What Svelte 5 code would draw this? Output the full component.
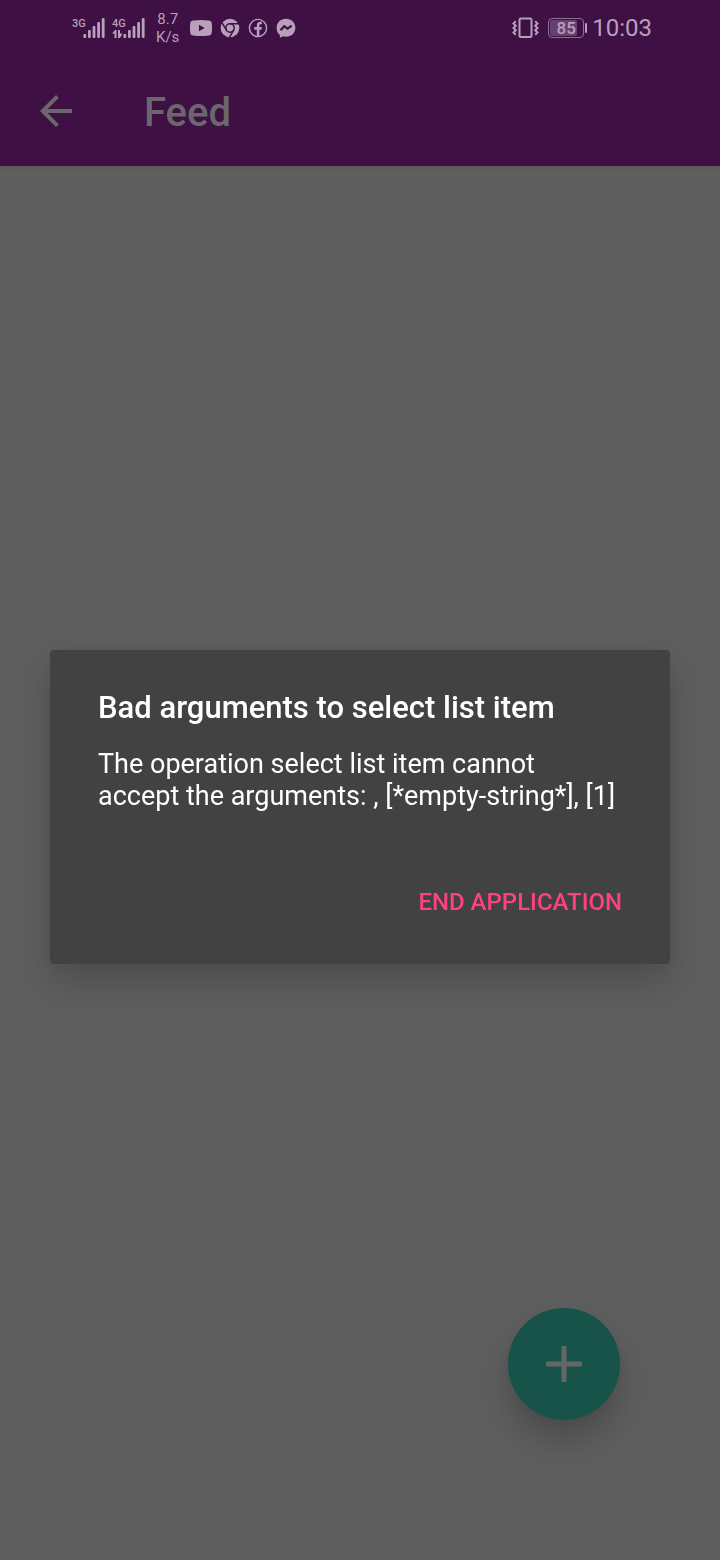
<script lang="ts">
    let {
        title = "Feed",
        networks = ["3G", "4G"],
        battery = 85,
        time = "10:03",
    }: {
        title?: string;
        networks?: string[];
        battery?: number;
        time?: string;
    } = $props();

    let dialogOpen = $state(true);

    const bars = [4, 8, 12, 16, 20];
</script>

<div class="screen">
    <div class="status-bar">
        <div class="status-group">
            {#each networks as network (network)}
                <svg class="signal" width="34" height="24" viewBox="0 0 34 24" aria-hidden="true">
                    <text x="0" y="11">{network}</text>
                    {#each bars as height, i (height)}
                        <rect x={11.4 + i * 4.6} y={22 - height} width="2.8" {height} rx="1" />
                    {/each}
                    {#if network === "4G"}
                        <path d="M0 17.5 3 14h1.500v8h-2v-4.500zM6 14h2v3.500h2.500L8 22H6z" />
                    {/if}
                </svg>
            {/each}
            <div class="speed"><span>8.7</span><span>K/s</span></div>
            <div class="apps">
                <svg width="22" height="20" viewBox="0 0 22 20" aria-hidden="true">
                    <path fill-rule="evenodd" d="M3 2.6Q11 1.4 19 2.6Q21.6 2.8 21.8 5.4Q22.3 10 21.8 14.6Q21.6 17.2 19 17.4Q11 18.6 3 17.4Q.4 17.2.2 14.6Q-.3 10 .2 5.4Q.4 2.8 3 2.6zM9 6.8v6.4l5.6-3.2z" />
                </svg>
                <svg width="20" height="20" viewBox="0 0 20 20" aria-hidden="true">
                    <circle cx="10" cy="10" r="9.3" />
                    <g class="cut">
                        <circle cx="10" cy="10" r="4.2" />
                        <path d="M10 5.8h9M6.4 12.1 2.1 4.8M13.6 12.1 9.4 19.4" />
                    </g>
                </svg>
                <svg width="20" height="20" viewBox="0 0 20 20" aria-hidden="true">
                    <circle class="ring" cx="10" cy="10" r="8.6" />
                    <path d="M8.8 18.6v-6.8H6.3V9.1h2.5V7.3c0-2.3 1.3-3.5 3.4-3.5h1.7v2.4h-1.2c-1 0-1.3.5-1.3 1.3v1.6h2.5l-.4 2.7h-2.1v6.8z" />
                </svg>
                <svg width="20" height="20" viewBox="0 0 20 20" aria-hidden="true">
                    <path d="M10 .7c5.4 0 9.4 3.9 9.4 9s-4 9-9.4 9c-1 0-1.9-.1-2.8-.4L3.9 19.8V17C1.8 15.3.6 12.8.6 9.7.6 4.6 4.6.7 10 .7z" />
                    <path class="bolt" d="M4.5 12.2 8.3 8.2 11.5 10.7 15.7 7.6" />
                </svg>
            </div>
        </div>
        <div class="status-group">
            <svg class="vibrate" width="28" height="22" viewBox="0 0 28 22" aria-hidden="true">
                <rect x="7.5" y="1.5" width="12" height="18.5" rx="1.5" />
                <path d="M3.8 4.2 1.5 6.5 3.8 8.7 1.5 11 3.8 13.2 1.5 15.5 3.8 17.7M23.2 4.2 25.5 6.5 23.2 8.7 25.5 11 23.2 13.2 25.5 15.5 23.2 17.7" />
            </svg>
            <div class="battery">
                <div class="battery-fill" style:width="{battery}%"></div>
                <span>{battery}</span>
            </div>
            <span class="time">{time}</span>
        </div>
    </div>

    <header class="app-bar">
        <button type="button" class="back" aria-label="Back">
            <svg width="48" height="48" viewBox="0 0 24 24" aria-hidden="true">
                <path d="M20 11H7.83l5.59-5.59L12 4l-8 8 8 8 1.41-1.41L7.83 13H20v-2z" />
            </svg>
        </button>
        <h1>{title}</h1>
    </header>

    <main></main>

    <button type="button" class="fab" aria-label="Add">
        <svg width="36" height="36" viewBox="0 0 36 36" aria-hidden="true">
            <path d="M15.5 0h5v15.5H36v5H20.5V36h-5V20.5H0v-5h15.5z" />
        </svg>
    </button>
</div>

{#if dialogOpen}
    <div class="overlay">
        <div class="dialog" role="alertdialog" aria-modal="true" aria-labelledby="dialog-title" aria-describedby="dialog-message">
            <h2 id="dialog-title">Bad arguments to select list item</h2>
            <p id="dialog-message">The operation select list item cannot accept the arguments: , [*empty-string*], [1]</p>
            <button type="button" class="action" onclick={() => (dialogOpen = false)}>END APPLICATION</button>
        </div>
    </div>
{/if}

<style>
    :global(body) {
        margin: 0;
        background: #5f5f5f;
    }

    .screen {
        --purple: #3f1044;
        --status: #b89fbc;
        display: flex;
        flex-direction: column;
        min-height: 100vh;
        background: #5f5f5f;
        font-family: Roboto, sans-serif;
    }

    svg {
        display: block;
        flex: none;
    }

    .status-bar {
        display: flex;
        justify-content: space-between;
        align-items: center;
        height: 56px;
        box-sizing: border-box;
        padding: 0 68px 0 72px;
        background: var(--purple);
        color: var(--status);
        fill: var(--status);
    }

    .status-group {
        display: flex;
        align-items: center;
        gap: 8px;
    }

    .signal {
        margin-right: -2px;
    }

    .signal text {
        font-size: 11px;
        font-weight: 500;
    }

    .speed {
        display: flex;
        flex-direction: column;
        align-items: center;
        margin-left: 4px;
        font-size: 15px;
        line-height: 18px;
    }

    .apps {
        display: flex;
        align-items: center;
        gap: 8px;
        margin-left: 3px;
    }

    .cut {
        fill: none;
        stroke: var(--purple);
        stroke-width: 1.5;
    }

    .ring {
        fill: none;
        stroke: var(--status);
        stroke-width: 1.4;
    }

    .bolt {
        fill: none;
        stroke: var(--purple);
        stroke-width: 2.2;
    }

    .vibrate {
        fill: none;
        stroke: var(--status);
        stroke-width: 2;
    }

    .battery {
        position: relative;
        width: 36px;
        height: 20px;
        box-sizing: border-box;
        padding: 1px;
        border: 1px solid #8f7094;
        border-radius: 4px;
    }

    .battery::after {
        content: "";
        position: absolute;
        top: 4px;
        right: -4px;
        width: 2px;
        height: 10px;
        border-radius: 1px;
        background: var(--status);
    }

    .battery-fill {
        height: 100%;
        border-radius: 2px;
        background: #664070;
    }

    .battery span {
        position: absolute;
        inset: 0;
        font-size: 17px;
        font-weight: 500;
        line-height: 18px;
        text-align: center;
    }

    .time {
        font-size: 24px;
        line-height: 28px;
    }

    .app-bar {
        display: flex;
        align-items: center;
        gap: 64px;
        height: 110px;
        box-sizing: border-box;
        padding: 0 32px;
        background: var(--purple);
        box-shadow: 0 1px 4px rgba(0, 0, 0, 0.1);
    }

    .back {
        display: flex;
        padding: 0;
        border: none;
        background: none;
        fill: #6b676c;
        cursor: pointer;
    }

    h1 {
        margin: 0;
        padding-top: 4px;
        color: #6b676c;
        font-size: 40px;
        font-weight: 500;
        line-height: 48px;
    }

    main {
        flex: 1;
    }

    .fab {
        position: fixed;
        right: 100px;
        bottom: 140px;
        display: flex;
        justify-content: center;
        align-items: center;
        width: 112px;
        height: 112px;
        padding: 0;
        border: none;
        border-radius: 50%;
        background: #18534a;
        fill: #666;
        box-shadow: 0 20px 36px rgba(0, 0, 0, 0.22), 0 2px 12px rgba(0, 0, 0, 0.06);
        cursor: pointer;
    }

    .overlay {
        position: fixed;
        inset: 0;
        display: flex;
        justify-content: center;
        align-items: center;
        padding: 54px 50px 0;
        font-family: Roboto, sans-serif;
    }

    .dialog {
        display: flex;
        flex-direction: column;
        flex: 1;
        padding: 38px 48px;
        border-radius: 4px;
        background: #424242;
        color: #fff;
        box-shadow: 0 18px 40px rgba(0, 0, 0, 0.2), 0 0 20px rgba(0, 0, 0, 0.06);
    }

    h2 {
        margin: 0;
        font-size: 31px;
        font-weight: 500;
        line-height: 40px;
    }

    p {
        margin: 20px 0 66px;
        font-size: 27px;
        line-height: 32px;
    }

    .action {
        align-self: flex-end;
        padding: 8px 0;
        border: none;
        background: none;
        color: #ff4081;
        font-family: inherit;
        font-size: 24px;
        font-weight: 500;
        line-height: 32px;
        cursor: pointer;
    }
</style>
